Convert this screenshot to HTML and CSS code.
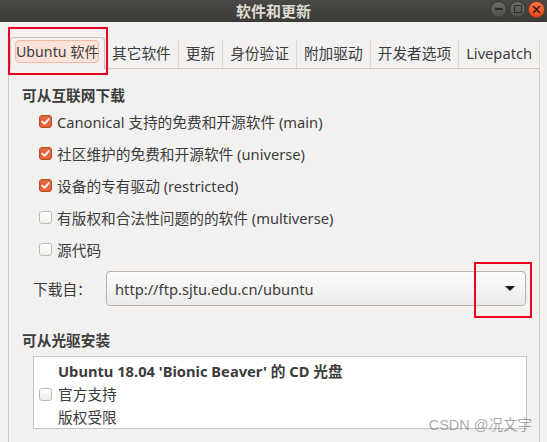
FILE: index.html
```html
<!DOCTYPE html>
<html lang="zh-CN">
<head>
    <meta charset="UTF-8">
    <title>软件和更新</title>
    <link rel="stylesheet" href="styles.css">
</head>
<body>
    <div class="window">
        <header class="titlebar">
            <span></span>
            <h1>软件和更新</h1>
            <div class="controls">
                <span class="wbtn wbtn-min"><i></i></span>
                <span class="wbtn wbtn-max"><i></i></span>
                <span class="wbtn wbtn-close">
                    <svg width="9" height="9" viewBox="0 0 9 9"><path d="M1.5 1.5l6 6M7.5 1.5l-6 6" stroke="#3a1a0c" stroke-width="1.6" stroke-linecap="round"/></svg>
                </span>
            </div>
        </header>

        <nav class="tabs">
            <div class="tab active">
                <span class="tab-label">Ubuntu 软件</span>
                <span class="mark mark-tab"></span>
            </div>
            <div class="tab">其它软件</div>
            <div class="tab">更新</div>
            <div class="tab">身份验证</div>
            <div class="tab">附加驱动</div>
            <div class="tab">开发者选项</div>
            <div class="tab">Livepatch</div>
        </nav>

        <section class="panel">
            <h2>可从互联网下载</h2>
            <ul class="checks">
                <li><span class="box checked"></span>Canonical 支持的免费和开源软件 (main)</li>
                <li><span class="box checked"></span>社区维护的免费和开源软件 (universe)</li>
                <li><span class="box checked"></span>设备的专有驱动 (restricted)</li>
                <li><span class="box"></span>有版权和合法性问题的的软件 (multiverse)</li>
                <li><span class="box"></span>源代码</li>
            </ul>

            <div class="source">
                <span class="source-label">下载自：</span>
                <div class="combo">
                    <span>http://ftp.sjtu.edu.cn/ubuntu</span>
                    <span class="arrow"></span>
                    <span class="mark mark-arrow"></span>
                </div>
            </div>

            <h2 class="second">可从光驱安装</h2>
            <div class="cdrom">
                <span class="box"></span>
                <div class="cd-text">
                    <strong>Ubuntu 18.04 'Bionic Beaver' 的 CD 光盘</strong>
                    <span>官方支持</span>
                    <span>版权受限</span>
                </div>
            </div>
        </section>

        <div class="watermark">CSDN @况文宇</div>
    </div>
</body>
</html>
```

FILE: styles.css
```css
* {
    padding: 0;
    margin: 0;
    box-sizing: border-box;
}

body {
    background-color: #f2f1f0;
    color: #3c3c3c;
    font-family: "Noto Sans", "Noto Sans CJK SC", sans-serif;
    font-size: 14.7px;
    overflow: hidden;
}

.window {
    position: relative;
    height: 442px;
}

/* title bar */
.titlebar {
    height: 22px;
    display: grid;
    grid-template-columns: 1fr auto 1fr;
    align-items: center;
    background: linear-gradient(#4a4945, #3b3a36);
}

.titlebar h1 {
    font-size: 15px;
    font-weight: bold;
    color: #dfdbd2;
    line-height: 20px;
}

.controls {
    display: flex;
    justify-content: flex-end;
    gap: 2px;
    padding-right: 2px;
    margin-top: -4px;
}

.wbtn {
    width: 17px;
    height: 17px;
    border-radius: 50%;
    background: linear-gradient(#6c6b67, #4f4e4a);
    border: 1px solid #33322f;
    display: flex;
    align-items: center;
    justify-content: center;
}

.wbtn-min i {
    width: 8px;
    height: 2px;
    background-color: #2e2d2a;
}

.wbtn-max i {
    width: 8px;
    height: 8px;
    border: 1.5px solid #2e2d2a;
}

.wbtn-close {
    background: linear-gradient(#f4764a, #e4491b);
    border-color: #8d3414;
}

/* tabs */
.tabs {
    display: flex;
    align-items: flex-end;
    height: 46px;
    padding-left: 10px;
}

.tab {
    height: 28px;
    padding: 0 7px;
    line-height: 26px;
    border-right: 1px solid #dcd9d5;
    white-space: nowrap;
}

.tab.active {
    position: relative;
    height: 32px;
    width: 95px;
    padding: 2px 5px 0 4px;
    border: 1px solid #c4c1bd;
    border-bottom: none;
    border-radius: 4px 4px 0 0;
    background-color: #f2f1f0;
    margin-bottom: -1px;
    z-index: 1;
}

.tab-label {
    display: block;
    height: 23px;
    line-height: 21px;
    font-size: 14.2px;
    text-align: center;
    border: 1px solid #f3b9a1;
    border-radius: 4px;
    background-color: #fbe3d9;
}

/* red annotation boxes */
.mark {
    position: absolute;
    border: 2px solid #e8001c;
}

.mark-tab {
    left: -3px;
    top: -11px;
    width: 100px;
    height: 48px;
}

.mark-arrow {
    left: 367px;
    top: -10px;
    width: 58px;
    height: 56px;
}

/* panel */
.panel {
    margin: 0 7px 0 8px;
    height: 374px;
    border: 1px solid #cfccc8;
    border-bottom: none;
    padding: 16px 13px 0;
}

h2 {
    font-size: 14.7px;
    font-weight: bold;
    line-height: 20px;
}

h2.second {
    margin-top: 24px;
}

.checks {
    list-style: none;
    padding-left: 17px;
}

.checks li {
    display: flex;
    align-items: center;
    gap: 5px;
    height: 32px;
}

.box {
    flex: none;
    width: 13px;
    height: 13px;
    border: 1px solid #bdbab6;
    border-radius: 3px;
    background: linear-gradient(#ffffff, #eeedeb);
}

.box.checked {
    border-color: #b84a28;
    background: #e2673c url("data:image/svg+xml,%3Csvg xmlns='http://www.w3.org/2000/svg' viewBox='0 0 11 11'%3E%3Cpath d='M2.3 5.6l2.2 2.2 4.3-4.6' fill='none' stroke='white' stroke-width='1.8' stroke-linecap='round' stroke-linejoin='round'/%3E%3C/svg%3E") center / 11px 11px no-repeat;
}

.source {
    display: flex;
    align-items: center;
    margin-top: 6px;
    padding-left: 11px;
}

.source-label {
    width: 73px;
}

.combo {
    position: relative;
    width: 420px;
    height: 35px;
    display: flex;
    align-items: center;
    justify-content: space-between;
    padding: 0 8px 0 8px;
    border: 1px solid #b6b3ae;
    border-radius: 4px;
    background: linear-gradient(#fdfdfd, #ebeae8);
}

.arrow {
    width: 0;
    height: 0;
    border-left: 5px solid transparent;
    border-right: 5px solid transparent;
    border-top: 5px solid #1a1a1a;
    margin-right: 2px;
}

.cdrom {
    display: flex;
    align-items: center;
    gap: 6px;
    margin: 6px 0 0 11px;
    width: 494px;
    height: 73px;
    padding: 4px 0 0 5px;
    border: 1px solid #c9c6c2;
    background-color: #ffffff;
}

.cd-text {
    display: flex;
    flex-direction: column;
    line-height: 23px;
}

.cd-text strong {
    font-weight: bold;
}

.watermark {
    position: absolute;
    right: 15px;
    bottom: 8px;
    font-family: "Liberation Sans", "Noto Sans CJK SC", sans-serif;
    font-size: 14.5px;
    color: rgba(110, 110, 110, 0.6);
}
```
